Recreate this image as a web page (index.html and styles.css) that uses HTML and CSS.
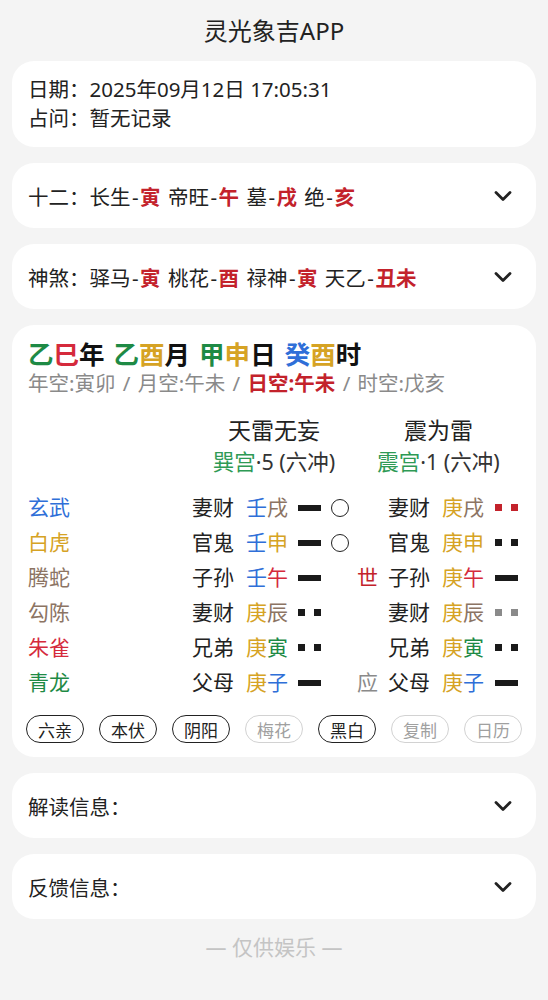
FILE: index.html
```html
<!DOCTYPE html>
<html>
	<head>
		<meta charset="UTF-8">
		<title>灵光象吉APP</title>
		<link rel="stylesheet" href="styles.css">
	</head>
	<body>
		<div class="page">
			<div class="title">灵光象吉APP</div>

			<div class="card info">
				<div>日期：2025年09月12日 17:05:31</div>
				<div>占问：暂无记录</div>
			</div>

			<div class="card fold">
				<div>十二：长生<i>-</i><span class="hl">寅</span> 帝旺<i>-</i><span class="hl">午</span> 墓<i>-</i><span class="hl">戌</span> 绝<i>-</i><span class="hl">亥</span></div>
				<svg class="chev" width="18" height="12" viewBox="0 0 18 12"><path d="M2 2.5 L9 9.5 L16 2.5" fill="none" stroke="#222" stroke-width="2.8" stroke-linecap="round" stroke-linejoin="round"/></svg>
			</div>

			<div class="card fold">
				<div>神煞：驿马<i>-</i><span class="hl">寅</span> 桃花<i>-</i><span class="hl">酉</span> 禄神<i>-</i><span class="hl">寅</span> 天乙<i>-</i><span class="hl">丑未</span></div>
				<svg class="chev" width="18" height="12" viewBox="0 0 18 12"><path d="M2 2.5 L9 9.5 L16 2.5" fill="none" stroke="#222" stroke-width="2.8" stroke-linecap="round" stroke-linejoin="round"/></svg>
			</div>

			<div class="card chart">
				<div class="pillars">
					<span><span class="wood">乙</span><span class="fire">巳</span>年</span>
					<span><span class="wood">乙</span><span class="metal">酉</span>月</span>
					<span><span class="wood">甲</span><span class="metal">申</span>日</span>
					<span><span class="water">癸</span><span class="metal">酉</span>时</span>
				</div>
				<div class="kong">年空:寅卯 / 月空:午未 / <span class="day">日空:午未</span> / 时空:戊亥</div>

				<div class="hex-head">
					<div class="hex-col left">
						<div class="hex-name">天雷无妄</div>
						<div class="hex-sub"><span class="gong">巽宫</span>·5 (六冲)</div>
					</div>
					<div class="hex-col right">
						<div class="hex-name">震为雷</div>
						<div class="hex-sub"><span class="gong">震宫</span>·1 (六冲)</div>
					</div>
				</div>

				<div class="yao-list">
					<div class="yao-row">
						<span class="god water">玄武</span>
						<span class="qin">妻财</span>
						<span class="gz"><span class="water">壬</span><span class="earth">戌</span></span>
						<span class="yao yang"></span>
						<span class="dong"><span class="ring"></span></span>
						<span class="mark"></span>
						<span class="qin r">妻财</span>
						<span class="gz r"><span class="metal">庚</span><span class="earth">戌</span></span>
						<span class="yao yin red"><b></b><b></b></span>
					</div>
					<div class="yao-row">
						<span class="god metal">白虎</span>
						<span class="qin">官鬼</span>
						<span class="gz"><span class="water">壬</span><span class="metal">申</span></span>
						<span class="yao yang"></span>
						<span class="dong"><span class="ring"></span></span>
						<span class="mark"></span>
						<span class="qin r">官鬼</span>
						<span class="gz r"><span class="metal">庚</span><span class="metal">申</span></span>
						<span class="yao yin"><b></b><b></b></span>
					</div>
					<div class="yao-row">
						<span class="god earth">腾蛇</span>
						<span class="qin">子孙</span>
						<span class="gz"><span class="water">壬</span><span class="fire">午</span></span>
						<span class="yao yang"></span>
						<span class="dong"></span>
						<span class="mark shi">世</span>
						<span class="qin r">子孙</span>
						<span class="gz r"><span class="metal">庚</span><span class="fire">午</span></span>
						<span class="yao yang"></span>
					</div>
					<div class="yao-row">
						<span class="god earth">勾陈</span>
						<span class="qin">妻财</span>
						<span class="gz"><span class="metal">庚</span><span class="earth">辰</span></span>
						<span class="yao yin"><b></b><b></b></span>
						<span class="dong"></span>
						<span class="mark"></span>
						<span class="qin r">妻财</span>
						<span class="gz r"><span class="metal">庚</span><span class="earth">辰</span></span>
						<span class="yao yin gray"><b></b><b></b></span>
					</div>
					<div class="yao-row">
						<span class="god fire">朱雀</span>
						<span class="qin">兄弟</span>
						<span class="gz"><span class="metal">庚</span><span class="wood">寅</span></span>
						<span class="yao yin"><b></b><b></b></span>
						<span class="dong"></span>
						<span class="mark"></span>
						<span class="qin r">兄弟</span>
						<span class="gz r"><span class="metal">庚</span><span class="wood">寅</span></span>
						<span class="yao yin"><b></b><b></b></span>
					</div>
					<div class="yao-row">
						<span class="god wood">青龙</span>
						<span class="qin">父母</span>
						<span class="gz"><span class="metal">庚</span><span class="water">子</span></span>
						<span class="yao yang"></span>
						<span class="dong"></span>
						<span class="mark ying">应</span>
						<span class="qin r">父母</span>
						<span class="gz r"><span class="metal">庚</span><span class="water">子</span></span>
						<span class="yao yang"></span>
					</div>
				</div>

				<div class="chips">
					<span class="chip">六亲</span>
					<span class="chip">本伏</span>
					<span class="chip">阴阳</span>
					<span class="chip off">梅花</span>
					<span class="chip">黑白</span>
					<span class="chip off">复制</span>
					<span class="chip off">日历</span>
				</div>
			</div>

			<div class="card fold">
				<div>解读信息：</div>
				<svg class="chev" width="18" height="12" viewBox="0 0 18 12"><path d="M2 2.5 L9 9.5 L16 2.5" fill="none" stroke="#222" stroke-width="2.8" stroke-linecap="round" stroke-linejoin="round"/></svg>
			</div>

			<div class="card fold">
				<div>反馈信息：</div>
				<svg class="chev" width="18" height="12" viewBox="0 0 18 12"><path d="M2 2.5 L9 9.5 L16 2.5" fill="none" stroke="#222" stroke-width="2.8" stroke-linecap="round" stroke-linejoin="round"/></svg>
			</div>

			<div class="footer">— 仅供娱乐 —</div>
		</div>
	</body>
</html>
```

FILE: styles.css
```css
*{
	margin: 0;
	padding: 0;
}
body{
	background: #f4f4f4;
	color: #222;
	font-family: "Noto Sans", "Noto Sans CJK SC", sans-serif;
}
.page{
	padding: 11px 12px 0;
}
.title{
	height: 40px;
	line-height: 40px;
	text-align: center;
	font-size: 24px;
	margin-bottom: 10px;
}
.card{
	background: #fff;
	border-radius: 22px;
	margin-bottom: 16px;
}
.info{
	padding: 14px 16px;
	font-size: 20.5px;
	line-height: 29px;
}
.fold{
	height: 65px;
	display: flex;
	align-items: center;
	justify-content: space-between;
	padding: 0 24px 0 16px;
	font-size: 20.5px;
	word-spacing: 2px;
}
.fold i{
	font-style: normal;
	margin: 0 1.5px;
}
.fold .hl{
	color: #c3222b;
	font-weight: bold;
}
.chev{
	display: block;
}

/* 排盘 */
.chart{
	padding: 14px 14px 14px 16px;
}
.pillars{
	display: flex;
	gap: 9px;
	font-size: 25.5px;
	line-height: 30px;
	font-weight: bold;
	color: #111;
}
.kong{
	font-size: 20.5px;
	line-height: 28px;
	color: #8a8a8a;
	word-spacing: 2px;
}
.kong .day{
	color: #c3222b;
	font-weight: bold;
}
.wood{ color: #1e8a45; }
.fire{ color: #d52a3c; }
.metal{ color: #d6a324; }
.water{ color: #2f6fd8; }
.earth{ color: #8c7463; }

.hex-head{
	display: flex;
	padding-left: 164px;
	margin-top: 17px;
}
.hex-col{
	text-align: center;
	white-space: nowrap;
}
.hex-col.left{
	width: 164px;
}
.hex-col.right{
	width: 145px;
	margin-left: 10px;
}
.hex-name{
	font-size: 23px;
	line-height: 32px;
}
.hex-sub{
	font-size: 21.5px;
	line-height: 32px;
	color: #333;
}
.hex-sub .gong{
	color: #2e9a55;
}

.yao-list{
	margin-top: 12px;
}
.yao-row{
	display: flex;
	align-items: center;
	height: 35px;
	font-size: 21px;
	line-height: 35px;
}
.yao-row .god{
	width: 164px;
	flex-shrink: 0;
}
.yao-row .qin,
.yao-row .gz{
	width: 42px;
	flex-shrink: 0;
	white-space: nowrap;
}
.yao-row .gz{
	margin-left: 12px;
}
.yao-row .qin.r{
	margin-left: 10px;
}
.yao-row .yao{
	width: 23px;
	height: 6px;
	margin-left: 10px;
	flex-shrink: 0;
}
.yao-row .gz.r + .yao{
	margin-left: 11px;
}
.yao.yang{
	background: #1a1a1a;
}
.yao.yin{
	display: flex;
	justify-content: space-between;
	height: 7px;
}
.yao.yin b{
	width: 7px;
	height: 7px;
	background: #1a1a1a;
}
.yao.yin.red b{
	background: #c3222b;
}
.yao.yin.gray b{
	background: #8a8a8a;
}
.yao-row .dong{
	width: 18px;
	height: 18px;
	margin-left: 10px;
	flex-shrink: 0;
}
.ring{
	display: block;
	width: 18px;
	height: 18px;
	box-sizing: border-box;
	border: 1.5px solid #222;
	border-radius: 50%;
}
.yao-row .mark{
	width: 21px;
	margin-left: 8px;
	flex-shrink: 0;
}
.mark.shi{
	color: #c3222b;
}
.mark.ying{
	color: #8a8a8a;
}

.chips{
	display: flex;
	gap: 15px;
	overflow: hidden;
	margin-top: 15px;
	margin-left: -2px;
}
.chip{
	flex-shrink: 0;
	width: 58px;
	height: 28px;
	box-sizing: border-box;
	border: 1.5px solid #222;
	border-radius: 14px;
	font-size: 17px;
	display: flex;
	align-items: center;
	justify-content: center;
}
.chip.off{
	border-color: #d2d2d2;
	color: #a0a0a0;
}

.footer{
	text-align: center;
	font-size: 21px;
	line-height: 24px;
	color: #c4c4c4;
}
```
